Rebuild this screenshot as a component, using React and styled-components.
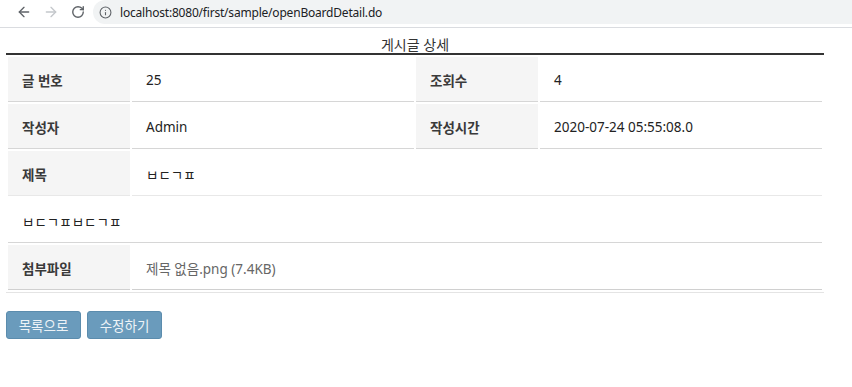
import React from "react";
import styled, { createGlobalStyle } from "styled-components";
import { ArrowLeft, ArrowRight, RotateCw, Info } from "lucide-react";

const GlobalStyle = createGlobalStyle`
  html, body { margin: 0; padding: 0; background: #fff; }
  body {
    font-family: "Noto Sans", "Noto Sans CJK KR", sans-serif;
    color: #333;
  }
`;

const Toolbar = styled.div`
  height: 27px;
  border-bottom: 1px solid #dadce0;
  display: flex;
  align-items: flex-start;
  background: #fff;
`;

const NavGroup = styled.div`
  display: flex;
  align-items: center;
  padding-left: 10px;
  height: 24px;
`;

const NavButton = styled.span`
  width: 27px;
  height: 24px;
  display: flex;
  align-items: center;
  justify-content: center;
  color: ${(p) => (p.$disabled ? "#c4c7cb" : "#5f6368")};
`;

const Address = styled.div`
  flex: 1;
  margin-left: 2px;
  height: 24px;
  background: #f1f3f4;
  border-radius: 12px 0 0 12px;
  display: flex;
  align-items: center;
  padding-left: 6px;
  gap: 8px;
  color: #202124;
  font-family: "Noto Sans", sans-serif;
  font-size: 12px;
  letter-spacing: -0.2px;
`;

const Page = styled.div`
  padding: 0 6px;
`;

const Table = styled.table`
  width: 818px;
  border-collapse: separate;
  border-spacing: 2px;
  border-top: 2px solid #333;
  border-bottom: 1px solid #e4e4e4;
  font-size: 13.5px;
  table-layout: fixed;
`;

const Caption = styled.caption`
  padding-top: 9px;
  line-height: 16px;
  height: 16px;
  font-size: 14px;
  color: #333;
  text-align: center;
`;

const Th = styled.th`
  background: #f5f5f5;
  font-weight: 700;
  color: #3a3a3a;
  text-align: left;
  height: 43px;
  padding: 1px 14px 0;
  border-bottom: 1px solid ${(p) => p.$line || "#d6d6d6"};
  font-size: 13.5px;
`;

const Td = styled.td`
  height: 43px;
  padding: 1px 14px 0;
  text-align: left;
  color: ${(p) => (p.$muted ? "#666" : "#222")};
  border-bottom: 1px solid ${(p) => p.$line || "#d6d6d6"};
`;

const Actions = styled.div`
  display: flex;
  gap: 6px;
  margin-top: 18px;
`;

const Button = styled.button`
  height: 28px;
  padding: 0 10px;
  background: #6a9bbc;
  border: 1px solid #5b8cad;
  border-radius: 3px;
  color: #eef3f7;
  font-family: "Noto Sans", "Noto Sans CJK KR", sans-serif;
  font-size: 13.5px;
  width: 75px;
  cursor: pointer;
`;

export default function App() {
  return (
    <>
      <GlobalStyle />
      <Toolbar>
        <NavGroup>
          <NavButton><ArrowLeft size={16} strokeWidth={2} /></NavButton>
          <NavButton $disabled><ArrowRight size={16} strokeWidth={2} /></NavButton>
          <NavButton><RotateCw size={14} strokeWidth={2.4} /></NavButton>
        </NavGroup>
        <Address>
          <Info size={13} color="#5f6368" strokeWidth={2} />
          <span>localhost:8080/first/sample/openBoardDetail.do</span>
        </Address>
      </Toolbar>
      <Page>
        <Table>
          <Caption>게시글 상세</Caption>
          <colgroup>
            <col style={{ width: "122px" }} />
            <col />
            <col style={{ width: "122px" }} />
            <col />
          </colgroup>
          <tbody>
            <tr>
              <Th>글 번호</Th>
              <Td>25</Td>
              <Th>조회수</Th>
              <Td>4</Td>
            </tr>
            <tr>
              <Th>작성자</Th>
              <Td>Admin</Td>
              <Th>작성시간</Th>
              <Td>2020-07-24 05:55:08.0</Td>
            </tr>
            <tr>
              <Th $line="#e8e8e8">제목</Th>
              <Td colSpan={3} $line="#e8e8e8">ㅂㄷㄱㅍ</Td>
            </tr>
            <tr>
              <Td colSpan={4}>ㅂㄷㄱㅍㅂㄷㄱㅍ</Td>
            </tr>
            <tr>
              <Th $line="#d0d0d0">첨부파일</Th>
              <Td colSpan={3} $muted $line="#d0d0d0">제목 없음.png (7.4KB)</Td>
            </tr>
          </tbody>
        </Table>
        <Actions>
          <Button>목록으로</Button>
          <Button>수정하기</Button>
        </Actions>
      </Page>
    </>
  );
}
